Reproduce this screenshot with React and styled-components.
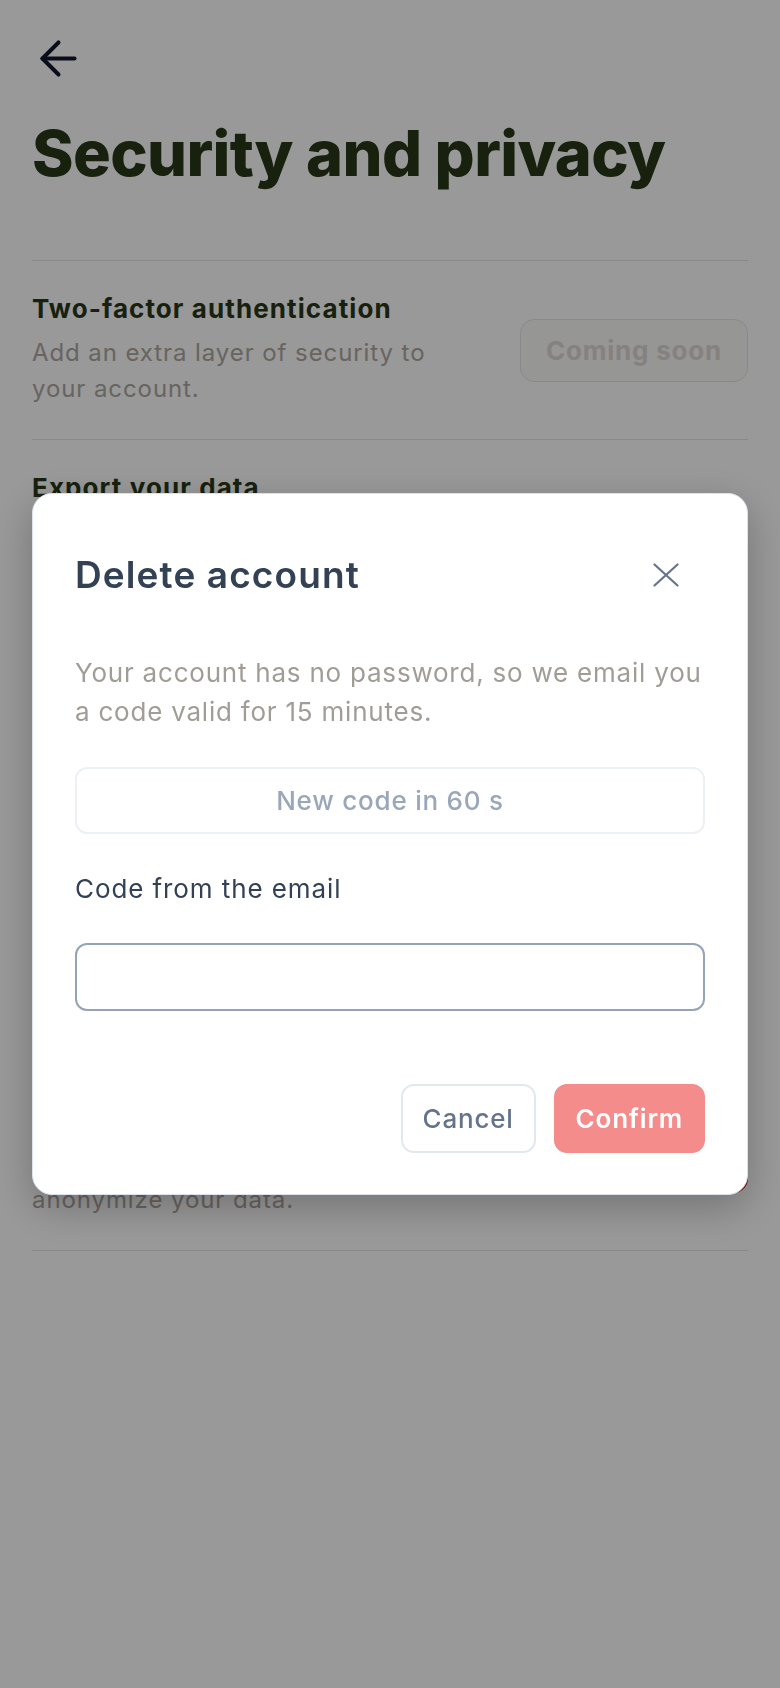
import React from "react";
import styled, { createGlobalStyle, css } from "styled-components";
import { ArrowLeft } from "lucide-react";

const GlobalStyle = createGlobalStyle`
  * {
    box-sizing: border-box;
  }
  body {
    margin: 0;
    background: #ffffff;
    font-family: Inter, "Liberation Sans", sans-serif;
  }
`;

const Page = styled.div`
  min-height: 100vh;
  padding: 31px 32px 0;
`;

const BackButton = styled.button`
  display: flex;
  width: 55px;
  height: 55px;
  margin-left: -1px;
  padding: 0;
  border: 0;
  background: none;
  color: #0f172a;
`;

const Title = styled.h1`
  margin: 33px 0 72px;
  font-size: 63px;
  line-height: 1.1;
  font-weight: 800;
  letter-spacing: -0.01em;
  color: #283717;
`;

const Row = styled.div`
  display: flex;
  align-items: center;
  justify-content: space-between;
  gap: 24px;
  padding: 32px 0;
  border-top: 1px solid #e7e5e4;
  &:last-child {
    border-bottom: 1px solid #e7e5e4;
  }
`;

const RowText = styled.div`
  flex: 1;
  max-width: 430px;
`;

const RowTitle = styled.h2`
  margin: 0 0 10px;
  font-size: 26px;
  line-height: 32px;
  font-weight: 700;
  letter-spacing: 0.042em;
  color: #283717;
`;

const RowDesc = styled.p`
  margin: 0;
  font-size: 24px;
  line-height: 36px;
  letter-spacing: 0.038em;
  color: #aea79f;
`;

const SessionList = styled.ul`
  margin: 22px 0 0;
  padding: 0;
  list-style: none;
`;

const Session = styled.li`
  font-size: 24px;
  line-height: 36px;
  color: #57534e;
  span {
    display: block;
    color: #aea79f;
  }
`;

const ActionButton = styled.button`
  flex: none;
  height: 63px;
  padding: 0 25px;
  border-radius: 14px;
  font: inherit;
  font-size: 26px;
  font-weight: 700;
  letter-spacing: 0.03em;
  ${(p) =>
    p.variant === "danger"
      ? css`
          border: 1px solid #dc2626;
          background: #dc2626;
          color: #ffffff;
        `
      : p.variant === "disabled"
      ? css`
          border: 1px solid #e7e5e4;
          background: #fafaf9;
          color: #dcd8d5;
        `
      : css`
          border: 1px solid #e7e5e4;
          background: #ffffff;
          color: #283717;
        `}
`;

const Overlay = styled.div`
  position: fixed;
  inset: 0;
  display: flex;
  align-items: center;
  justify-content: center;
  padding: 0 32px;
  background: rgba(0, 0, 0, 0.4);
`;

const Modal = styled.div`
  width: 100%;
  padding: 59px 42px 41px;
  border: 1px solid #dbe2ec;
  border-radius: 20px;
  background: #ffffff;
  box-shadow: 0 12px 40px rgba(0, 0, 0, 0.25);
`;

const ModalHeader = styled.div`
  display: flex;
  align-items: center;
  justify-content: space-between;
`;

const ModalTitle = styled.h2`
  margin: 0;
  font-size: 37px;
  line-height: 44px;
  font-weight: 600;
  letter-spacing: 0.03em;
  color: #334155;
`;

const CloseButton = styled.button`
  display: flex;
  align-items: center;
  justify-content: center;
  width: 48px;
  height: 44px;
  margin-right: 15px;
  padding: 0;
  border: 0;
  background: none;
  color: #64748b;
`;

const ModalText = styled.p`
  margin: 56px 0 36px;
  font-size: 26px;
  line-height: 39px;
  letter-spacing: 0.03em;
  color: #a29c97;
`;

const ResendButton = styled.button`
  display: block;
  width: 100%;
  height: 67px;
  border: 2px solid #edf1f5;
  border-radius: 12px;
  background: #ffffff;
  font: inherit;
  font-size: 26px;
  font-weight: 500;
  letter-spacing: 0.03em;
  color: #9aa7ba;
`;

const FieldLabel = styled.label`
  display: block;
  margin-top: 37px;
  font-size: 26px;
  line-height: 36px;
  letter-spacing: 0.035em;
  color: #334155;
`;

const CodeInput = styled.input`
  display: block;
  width: 100%;
  height: 68px;
  margin-top: 36px;
  padding: 0 18px;
  border: 2px solid #94a3b8;
  border-radius: 12px;
  font: inherit;
  font-size: 26px;
  color: #334155;
  outline: none;
`;

const ModalFooter = styled.div`
  display: flex;
  justify-content: flex-end;
  gap: 18px;
  margin-top: 73px;
`;

const FooterButton = styled.button`
  height: 69px;
  padding: 0 20px;
  border-radius: 13px;
  font: inherit;
  font-size: 26px;
  letter-spacing: 0.03em;
  ${(p) =>
    p.primary
      ? css`
          border: 2px solid #f48c8c;
          background: #f48c8c;
          color: #ffffff;
          font-weight: 600;
        `
      : css`
          border: 2px solid #e2e8f0;
          background: #ffffff;
          color: #64748b;
          font-weight: 500;
        `}
`;

function CloseIcon() {
  return (
    <svg width="26" height="24" viewBox="0 0 26 24" fill="none">
      <path
        d="M1.5 1.5 24.5 22.5M24.5 1.5 1.5 22.5"
        stroke="currentColor"
        strokeWidth="2.2"
        strokeLinecap="round"
      />
    </svg>
  );
}

const sessions = [
  ["Pixel 8, Berlin", "Active now"],
  ["MacBook Air, Berlin", "2 hours ago"],
  ["iPad, Hamburg", "3 days ago"],
  ["Firefox, Leipzig", "2 weeks ago"],
];

export default function App() {
  return (
    <>
      <GlobalStyle />
      <Page>
        <BackButton aria-label="Back">
          <ArrowLeft size={55} strokeWidth={1.75} />
        </BackButton>
        <Title>Security and privacy</Title>
        <div>
          <Row>
            <RowText>
              <RowTitle>Two-factor authentication</RowTitle>
              <RowDesc>Add an extra layer of security to your account.</RowDesc>
            </RowText>
            <ActionButton variant="disabled">Coming soon</ActionButton>
          </Row>
          <Row>
            <RowText>
              <RowTitle>Export your data</RowTitle>
              <RowDesc>
                Download a copy of everything you have saved as a file.
              </RowDesc>
            </RowText>
            <ActionButton>Export</ActionButton>
          </Row>
          <Row>
            <RowText>
              <RowTitle>Active sessions</RowTitle>
              <RowDesc>Devices signed in to you.</RowDesc>
              <SessionList>
                {sessions.map(([device, seen]) => (
                  <Session key={device}>
                    {device}
                    <span>{seen}</span>
                  </Session>
                ))}
              </SessionList>
            </RowText>
            <ActionButton>Sign out</ActionButton>
          </Row>
          <Row>
            <RowText>
              <RowTitle>Delete account</RowTitle>
              <RowDesc>Erase your account for good and anonymize your data.</RowDesc>
            </RowText>
            <ActionButton variant="danger">Delete</ActionButton>
          </Row>
        </div>
      </Page>
      <Overlay>
        <Modal>
          <ModalHeader>
            <ModalTitle>Delete account</ModalTitle>
            <CloseButton aria-label="Close">
              <CloseIcon />
            </CloseButton>
          </ModalHeader>
          <ModalText>
            Your account has no password, so we email you a code valid for 15
            minutes.
          </ModalText>
          <ResendButton disabled>New code in 60 s</ResendButton>
          <FieldLabel htmlFor="code">Code from the email</FieldLabel>
          <CodeInput id="code" />
          <ModalFooter>
            <FooterButton>Cancel</FooterButton>
            <FooterButton primary>Confirm</FooterButton>
          </ModalFooter>
        </Modal>
      </Overlay>
    </>
  );
}
